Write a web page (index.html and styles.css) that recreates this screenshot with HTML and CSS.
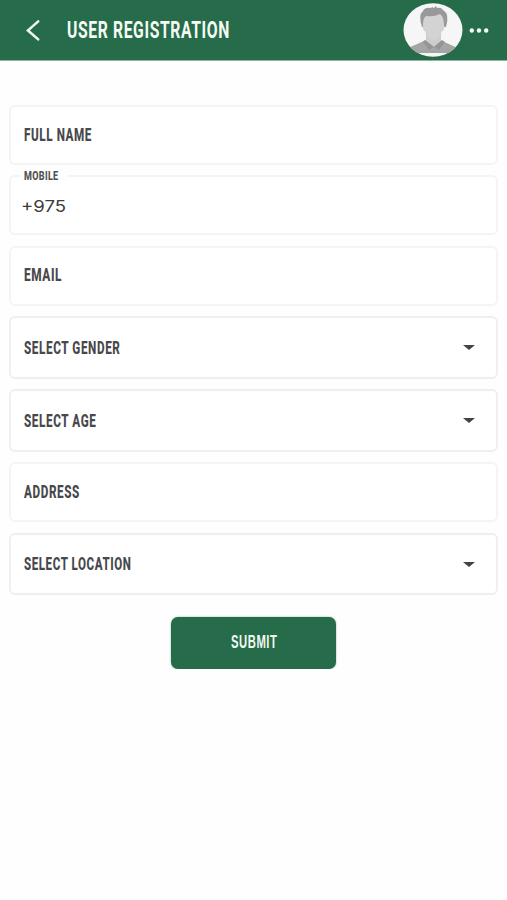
FILE: index.html
```html
<!DOCTYPE html>
<html lang="en">
<head>
<meta charset="utf-8">
<title>User Registration</title>
<link rel="stylesheet" href="styles.css">
</head>
<body>
<header class="bar">
  <svg class="back" width="16" height="24" viewBox="0 0 16 24"><path d="M13.2 3.4 3 12.4l10.2 9"/></svg>
  <svg class="title" width="170" height="24"><text x="0" y="20" textLength="163" lengthAdjust="spacingAndGlyphs">USER REGISTRATION</text></svg>
  <svg class="avatar" width="60" height="54" viewBox="0 0 60 54">
    <defs><clipPath id="face"><ellipse cx="30" cy="27" rx="29.5" ry="26.7"/></clipPath></defs>
    <ellipse cx="30" cy="27" rx="29.5" ry="26.7" fill="#f6f6f6"/>
    <g clip-path="url(#face)">
      <path d="M4 50q1-6 8-8l11-5h14l11 5q7 2 8 8z" fill="#a5a5a5"/>
      <path d="M23 29h15v9l-7 6-8-6z" fill="#cdcdcd"/>
      <path d="m22 37 9 7-5 3-6-8zm17 0-8 7 5 3 6-8z" fill="#959595"/>
      <path d="M19 24q-4-12 1-16 2-4 8-3l1-1 2 1 2-2 1 2q4-1 6 2 7 4 3 17z" fill="#999"/>
      <path d="M20 22q0-7 3-9 8 1 14-2 4 3 4 11 1 2-1 6h-1q-2 9-8 9t-9-9h-1q-2-3-1-6z" fill="#d3d3d3"/>
    </g>
  </svg>
  <svg class="more" width="20" height="6" viewBox="0 0 20 6"><circle cx="2.8" cy="3.5" r="2.2"/><circle cx="10" cy="3.5" r="2.2"/><circle cx="17.2" cy="3.5" r="2.2"/></svg>
</header>
<main class="form">
  <div class="field"><svg class="label" width="120" height="20"><text x="0" y="16" textLength="68" lengthAdjust="spacingAndGlyphs">FULL NAME</text></svg></div>
  <div class="field">
    <span class="legend"><svg class="small" width="36" height="12"><text x="0" y="10.5" textLength="34.5" lengthAdjust="spacingAndGlyphs">MOBILE</text></svg></span>
    <svg class="value" width="60" height="20"><text x="0" y="16.5" textLength="45" lengthAdjust="spacingAndGlyphs">+975</text></svg>
  </div>
  <div class="field"><svg class="label" width="120" height="20"><text x="0" y="16" textLength="38" lengthAdjust="spacingAndGlyphs">EMAIL</text></svg></div>
  <div class="field select"><svg class="label" width="120" height="20"><text x="0" y="15.5" textLength="96.5" lengthAdjust="spacingAndGlyphs">SELECT GENDER</text></svg><i class="caret"></i></div>
  <div class="field select"><svg class="label" width="120" height="20"><text x="0" y="15.5" textLength="72.5" lengthAdjust="spacingAndGlyphs">SELECT AGE</text></svg><i class="caret"></i></div>
  <div class="field"><svg class="label" width="120" height="20"><text x="0" y="16" textLength="56" lengthAdjust="spacingAndGlyphs">ADDRESS</text></svg></div>
  <div class="field select"><svg class="label" width="120" height="20"><text x="0" y="16" textLength="107.5" lengthAdjust="spacingAndGlyphs">SELECT LOCATION</text></svg><i class="caret"></i></div>
  <button class="submit" type="button"><svg class="label" width="46" height="20"><text x="0" y="16" textLength="46.5" lengthAdjust="spacingAndGlyphs">SUBMIT</text></svg></button>
</main>
</body>
</html>
```
FILE: styles.css
```css
* { box-sizing: border-box; }
body { margin: 0; background: #fefefe; font-family: Roboto, "Liberation Sans", sans-serif; }
svg { display: block; flex: none; overflow: visible; }
.bar { display: flex; align-items: center; height: 60px; padding: 0 18px 0 25px; background: #266c4a; box-shadow: 0 1px #8fb5a1; }
.back path { fill: none; stroke: #eef8f0; stroke-width: 2.6; stroke-linecap: round; }
.title { margin-left: 25.5px; fill: #f4fbf4; font-size: 23px; font-weight: 700; letter-spacing: 0.9px; }
.avatar { margin-left: auto; }
.more { margin-left: 6px; fill: #f8fcf8; }
.form { display: flex; flex-direction: column; gap: 10.4px; padding: 45px 9px 0; }
.field { position: relative; display: flex; align-items: center; justify-content: space-between; height: 60px; padding: 0 21px 1px 13px; border: 2px solid #f4f4f4; border-radius: 6px; background: #fff; }
.select { height: 62.7px; padding-bottom: 0; border-color: #efefef; }
.label { fill: #48484b; font-size: 18px; font-weight: 800; letter-spacing: 0.9px; }
.value { margin-left: -3px; fill: #3c3c3c; font-family: Inter, sans-serif; font-size: 16.5px; }
.legend { position: absolute; left: 9px; top: -8px; padding: 0 7px 0 4px; background: #fefefe; }
.small { fill: #505052; font-size: 13.3px; font-weight: 800; letter-spacing: 0.5px; }
.caret { border: 6px solid transparent; border-top: 5.5px solid #444; border-bottom: 0; }
.submit { display: flex; align-items: center; justify-content: center; align-self: center; width: 165px; height: 52px; margin: 11px 0 0; padding: 0 0 1px; border: 0; border-radius: 7px; background: #266c4a; box-shadow: 0 0 2px #266c4a88; }
.submit .label { fill: #eff8ef; }
```
